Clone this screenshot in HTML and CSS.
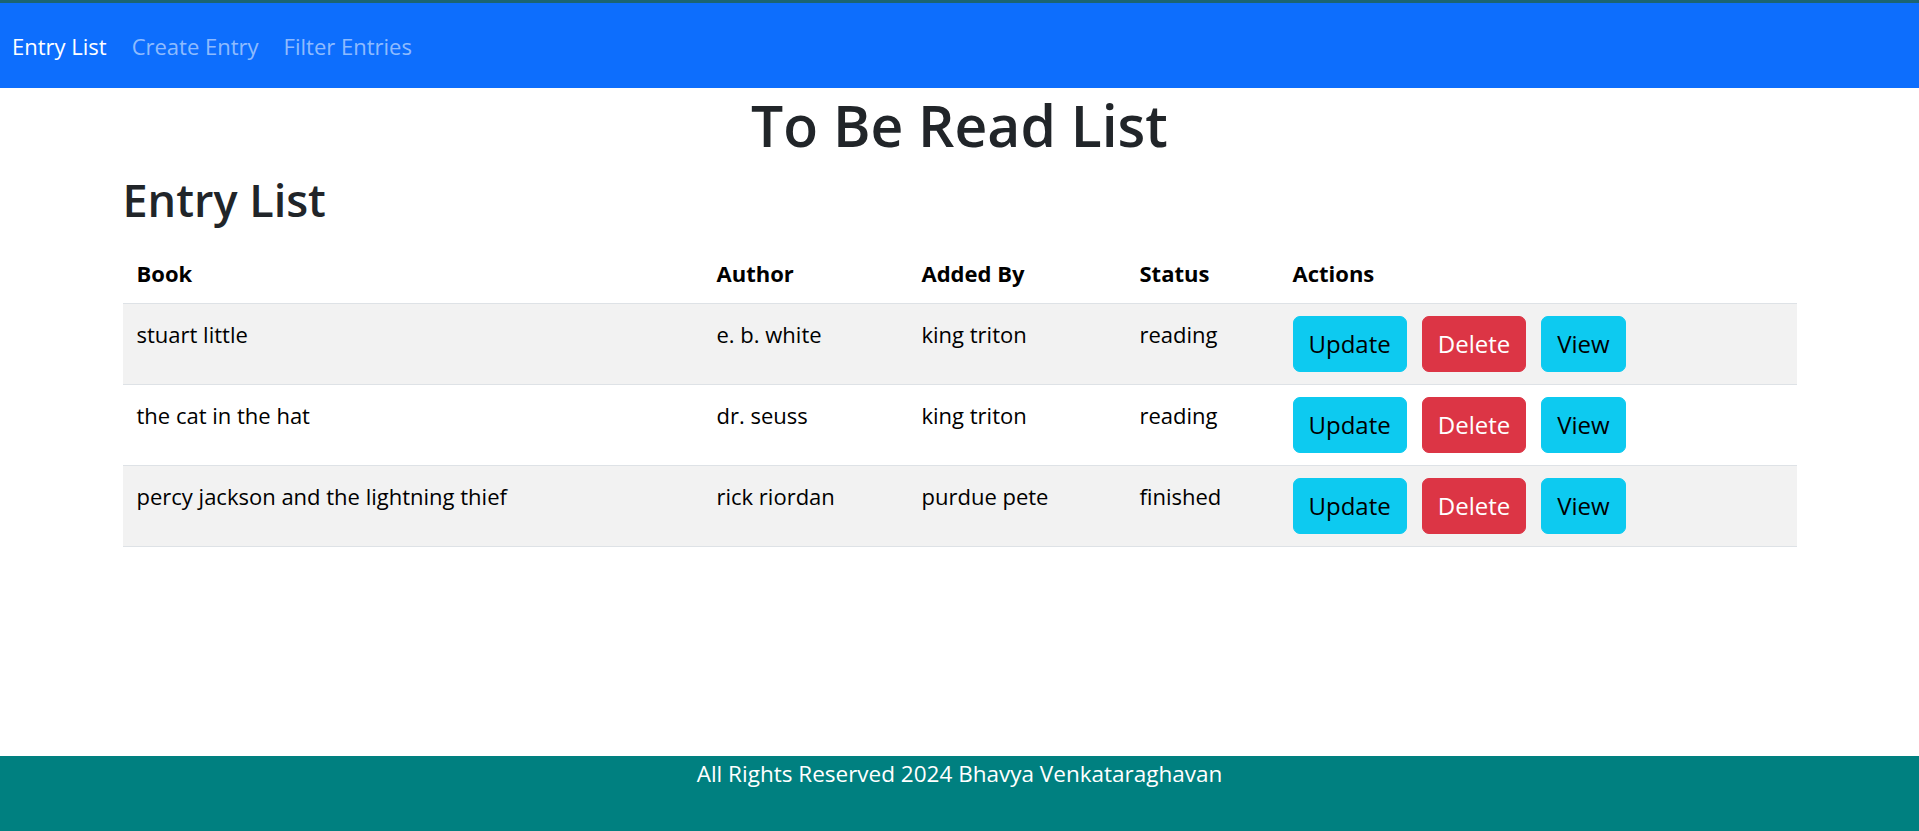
FILE: index.html
```html
<!DOCTYPE html>
<html lang="en">
<head>
<meta charset="utf-8">
<title>To Be Read List</title>
<link rel="stylesheet" href="styles.css">
</head>
<body>
<div class="page">
  <nav class="navbar">
    <a class="nav-link active" href="#">Entry List</a>
    <a class="nav-link" href="#">Create Entry</a>
    <a class="nav-link" href="#">Filter Entries</a>
  </nav>
  <main class="main">
    <h1 class="title">To Be Read List</h1>
    <div class="container">
      <h2 class="subtitle">Entry List</h2>
      <table class="table">
        <thead>
          <tr>
            <th class="c-book">Book</th>
            <th class="c-author">Author</th>
            <th class="c-added">Added By</th>
            <th class="c-status">Status</th>
            <th class="c-actions">Actions</th>
          </tr>
        </thead>
        <tbody>
          <tr class="striped">
            <td>stuart little</td>
            <td>e. b. white</td>
            <td>king triton</td>
            <td>reading</td>
            <td><div class="actions"><button class="btn btn-info">Update</button><button class="btn btn-danger">Delete</button><button class="btn btn-info">View</button></div></td>
          </tr>
          <tr>
            <td>the cat in the hat</td>
            <td>dr. seuss</td>
            <td>king triton</td>
            <td>reading</td>
            <td><div class="actions"><button class="btn btn-info">Update</button><button class="btn btn-danger">Delete</button><button class="btn btn-info">View</button></div></td>
          </tr>
          <tr class="striped">
            <td>percy jackson and the lightning thief</td>
            <td>rick riordan</td>
            <td>purdue pete</td>
            <td>finished</td>
            <td><div class="actions"><button class="btn btn-info">Update</button><button class="btn btn-danger">Delete</button><button class="btn btn-info">View</button></div></td>
          </tr>
        </tbody>
      </table>
    </div>
  </main>
  <footer class="footer">All Rights Reserved 2024 Bhavya Venkataraghavan</footer>
</div>
</body>
</html>
```

FILE: styles.css
```css
* { box-sizing: border-box; }
html, body { margin: 0; padding: 0; }
body {
  font-family: "Segoe UI", "Open Sans", "Noto Sans", sans-serif;
  color: #212529;
  background: #fff;
}
.page {
  min-height: 100vh;
  display: flex;
  flex-direction: column;
}
.navbar {
  height: 88px;
  border-top: 3px solid #1b6472;
  background: #0d6efd;
  display: flex;
  align-items: center;
  gap: 25px;
  padding-left: 12px;
}
.nav-link {
  font-size: 22px;
  line-height: 36px;
  color: rgba(255, 255, 255, 0.55);
  text-decoration: none;
}
.nav-link.active { color: #fff; }
.main { flex: 1; }
.title {
  margin: 0;
  text-align: center;
  font-size: 57px;
  font-weight: 600;
  line-height: 74px;
}
.container {
  width: 1674px;
  margin: 0 auto;
}
.subtitle {
  margin: 8px 0 17px;
  font-size: 45px;
  font-weight: 600;
  line-height: 60px;
}
.table {
  width: 100%;
  border-collapse: collapse;
  color: #000;
  font-size: 22px;
  line-height: 32px;
}
.table th, .table td {
  text-align: left;
  vertical-align: top;
  padding: 12px 14px;
  border-bottom: 1px solid #dee2e6;
}
.table th {
  font-weight: 700;
  padding-top: 10px;
  padding-bottom: 14px;
}
.table td { padding-top: 14px; }
.c-book { width: 580px; }
.c-author { width: 205px; }
.c-added { width: 218px; }
.c-status { width: 153px; }
.striped td { background: #f2f2f2; }
.actions {
  display: flex;
  gap: 15px;
  margin-top: -2px;
}
.btn {
  font-family: inherit;
  font-size: 24px;
  line-height: 36px;
  padding: 9px 15px;
  border: 1px solid transparent;
  border-radius: 7px;
  cursor: pointer;
}
.btn-info { background: #0dcaf0; color: #000; border-color: #0dcaf0; }
.btn-danger { background: #dc3545; color: #fff; border-color: #dc3545; }
.footer {
  height: 75px;
  background: #008080;
  color: #fff;
  text-align: center;
  font-size: 22.5px;
  line-height: 36px;
}
```
